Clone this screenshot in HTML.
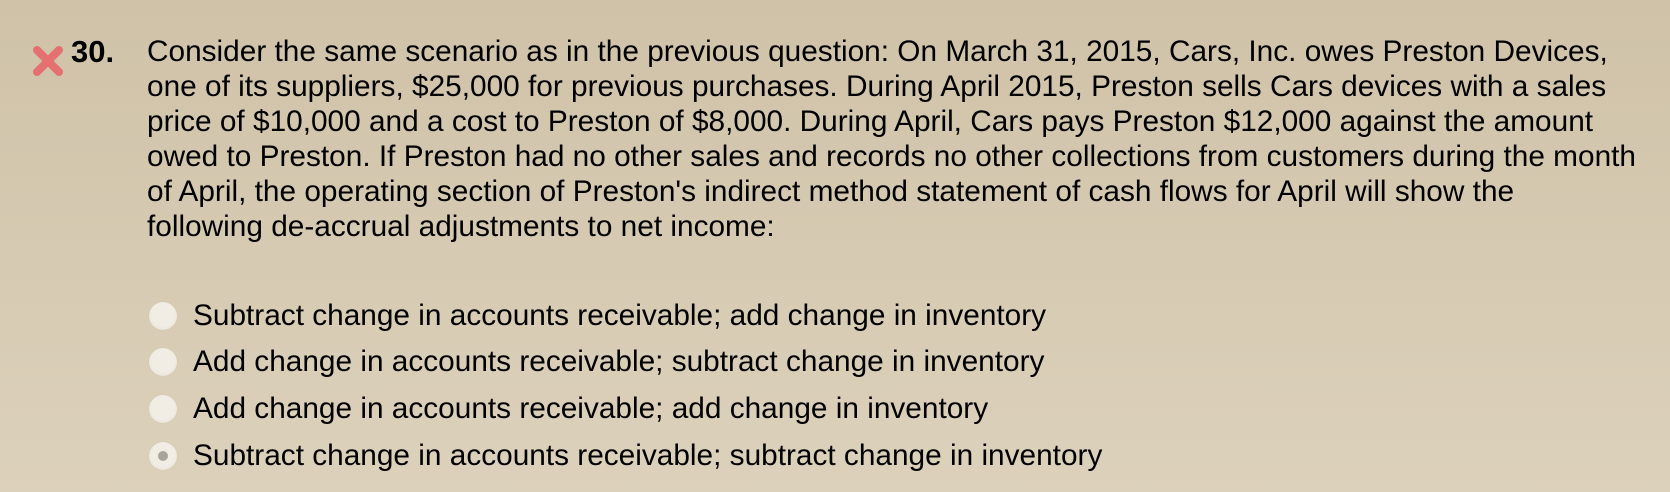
<!DOCTYPE html>
<html><head><style>
html,body{margin:0;padding:0}
body{width:1670px;height:492px;overflow:hidden;background:linear-gradient(#cfc2a8,#dcd1bb);font-family:"Liberation Sans",Arial,sans-serif;color:#000;position:relative}
.x{position:absolute;left:30px;top:43px}
.num{position:absolute;left:71px;top:34px;font-size:31px;line-height:35px;font-weight:bold}
.q{position:absolute;left:147px;top:34px;font-size:29.8px;line-height:35px;white-space:nowrap}
.opt{position:absolute;left:193px;font-size:29.8px;line-height:34px;white-space:nowrap}
.r{position:absolute;left:149px;width:28px;height:28px;border-radius:50%;background:radial-gradient(circle at 50% 45%,#f1ede4 55%,#e2dccd 100%);box-shadow:0 0 1px #cbc2b0}
.r.s::after{content:"";position:absolute;left:9px;top:9px;width:10px;height:10px;border-radius:50%;background:#a8a49c}
</style></head><body>
<svg class="x" width="36" height="36" viewBox="0 0 36 36"><path d="M7 7L29 29M29 7L7 29" stroke="#e8676a" stroke-width="8" stroke-linecap="round" opacity="0.9"/></svg>
<div class="num">30.</div>
<div class="q">Consider the same scenario as in the previous question: On March 31, 2015, Cars, Inc. owes Preston Devices,<br>one of its suppliers, $25,000 for previous purchases. During April 2015, Preston sells Cars devices with a sales<br>price of $10,000 and a cost to Preston of $8,000. During April, Cars pays Preston $12,000 against the amount<br>owed to Preston. If Preston had no other sales and records no other collections from customers during the month<br>of April, the operating section of Preston's indirect method statement of cash flows for April will show the<br>following de-accrual adjustments to net income:</div>
<div class="r" style="top:302px"></div><div class="opt" style="top:299px">Subtract change in accounts receivable; add change in inventory</div>
<div class="r" style="top:348px"></div><div class="opt" style="top:345px">Add change in accounts receivable; subtract change in inventory</div>
<div class="r" style="top:395px"></div><div class="opt" style="top:392px">Add change in accounts receivable; add change in inventory</div>
<div class="r s" style="top:442px"></div><div class="opt" style="top:439px">Subtract change in accounts receivable; subtract change in inventory</div>
</body></html>
